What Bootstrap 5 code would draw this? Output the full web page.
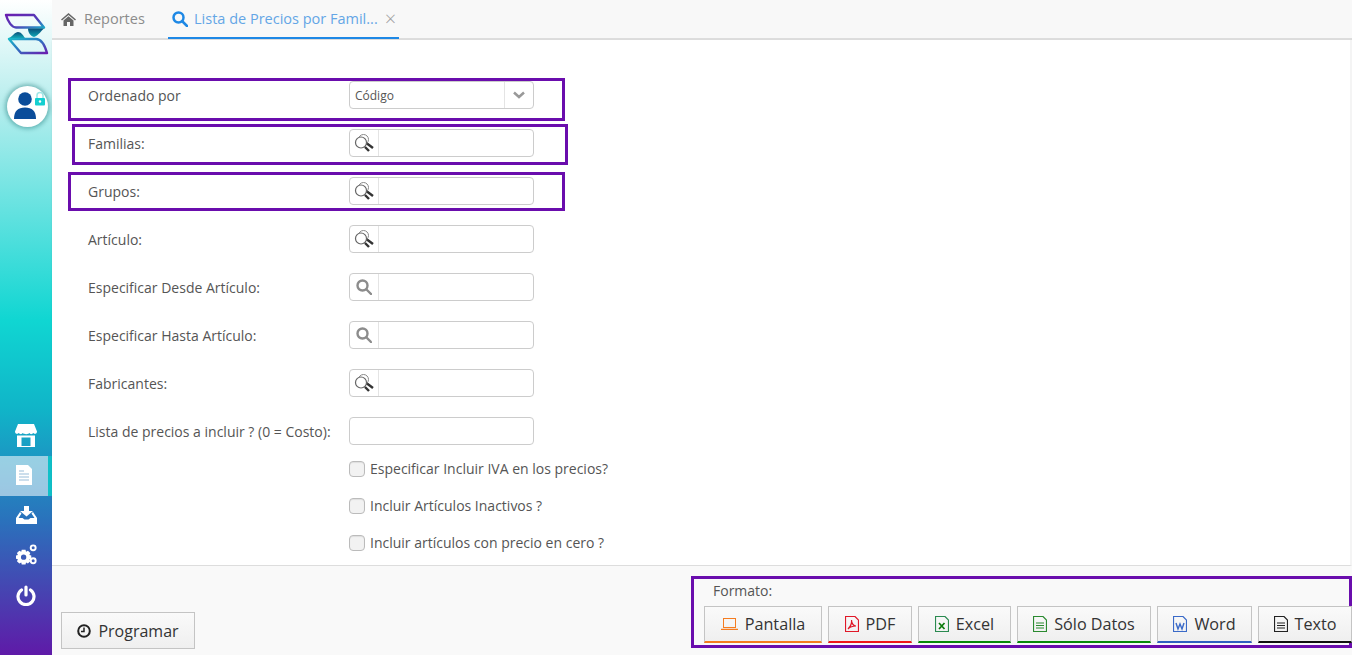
<!DOCTYPE html>
<html lang="es">
<head>
<meta charset="utf-8">
<title>Lista de Precios</title>
<link href="https://cdn.jsdelivr.net/npm/bootstrap@5.3.0/dist/css/bootstrap.min.css" rel="stylesheet">
<style>
html,body{height:100%;overflow:hidden}
body{font-family:"Open Sans","Noto Sans",sans-serif;font-size:14px;color:#555;background:#f9f9f9}
.shell{height:655px}
.side{width:52px;flex:none;background:linear-gradient(180deg,#fff 0,#b9eeee 100px,#10d6d2 320px,#10b4c8 410px,#2a72bc 520px,#4a3eb0 600px,#5f1aa8 655px)}
.logo-box{height:68px;padding:12px 0 0 4px}
.avatar{width:41px;height:41px;margin:18px 0 0 7px;border-radius:50%;background:#fff;box-shadow:0 0 4px 2px rgba(0,100,100,.4)}
.avatar svg{display:block}
.side-nav{margin-top:auto;padding-bottom:39px}
.side-item{height:40px;display:flex;align-items:center;justify-content:center}
.side-item svg.up{margin-bottom:2px}
.side-item.on{background:rgba(255,255,255,.55);border-right:4px solid #10c0c8}
.side-item.h38{height:38px}
.side-item.h41{height:41px}
.mainc{min-width:0}
.tabbar{height:40px;background:#f8f8f8;border-bottom:2px solid #ddd;padding-left:9px;font-size:14.5px}
.tb{height:38px;display:flex;align-items:center;color:#8c8c8c}
.tb.first{width:107px;gap:8px}
.tb.act{width:231px;color:#64a6e6;border-bottom:2px solid #1e88e5;margin-bottom:-1px;height:39px;padding-left:4px;gap:6px}
.tb .xx{color:#a0a0a0;font-size:20px;margin-left:1px;line-height:1;font-weight:300}
.paper{height:526px;background:#fff;border-right:2px solid #f4f4f4;border-bottom:1px solid #ddd;box-shadow:0 1px 2px rgba(0,0,0,.08);padding:31px 0 0 36px;position:relative}
.frow{height:48px;display:flex;align-items:center}
.frow label{width:261px;flex:none;white-space:nowrap}
.fbox{width:185px;height:28px;border:1px solid #ccc;border-radius:4px;display:flex;background:#fff;overflow:hidden}
.fadd{width:29px;flex:none;border-right:1px solid #e4e4e4;display:flex;align-items:center;justify-content:center}
.fsel{flex:1;padding:0 5px;font-size:12px;line-height:28px;color:#555}
.fcar{width:29px;flex:none;border-left:1px solid #e4e4e4;display:flex;align-items:center;justify-content:center}
.cks{margin-left:261px;margin-top:-5px}
.ckrow{height:37px;display:flex;align-items:center;gap:5px;margin:0}
.ckbox{width:16px;height:16px;border:1px solid #bbb;border-radius:4px;background:#f2f2f2;box-shadow:inset 0 1px 1px rgba(0,0,0,.08);flex:none}
.mark-a{position:absolute;border:3px solid #6a0dad;pointer-events:none}
.mk1{left:16px;top:38px;width:497px;height:43px}
.mk2{left:20px;top:84px;width:496px;height:41px}
.mk3{left:16px;top:132px;width:497px;height:39px}
.footbar{height:89px;position:relative;background:#f9f9f9;padding:0 0 6px 9px}
.pbtn,.fbtn{border:1px solid #c4c4c4;border-radius:0;background:linear-gradient(180deg,#fafafa,#efefef);color:#333;font-size:16px;height:37px;padding:0;display:inline-flex;align-items:center;justify-content:center;gap:7px}
.pbtn{width:134px}
.fmt{position:absolute;left:639px;top:10px;width:661px;height:72px;border:3px solid #6a0dad;padding:3px 0 0 10px}
.fmt-label{padding-left:9px;height:24px;line-height:18px}
.fmt-row{gap:6px}
.fbtn{border-bottom-width:2px;flex:none;font-size:16.2px}
.w-pan{width:118px}.w-pdf{width:84px}.w-xls{width:93px}.w-sol{width:134px}.w-wrd{width:95px}.w-txt{width:94px;margin-right:-4px}
.b-or{border-bottom-color:#f57c20}.b-re{border-bottom-color:#f01818}.b-gr{border-bottom-color:#0a8a0a}.b-bl{border-bottom-color:#3060c0}.b-bk{border-bottom-color:#111}
</style>
</head>
<body>
<svg class="d-none" aria-hidden="true">
  <symbol id="dbl" viewBox="0 0 20 18"><circle cx="9.500" cy="5.500" r="5" fill="none" stroke="#888" stroke-width="1"/><circle cx="7" cy="8.500" r="5.500" fill="#fff" stroke="#666" stroke-width="1.200"/><path d="M13 9.500 19 14" stroke="#333" stroke-width="2.400"/><path d="M11 13 15 17" stroke="#333" stroke-width="2.400"/></symbol>
  <symbol id="mag" viewBox="0 0 16 16"><circle cx="6.500" cy="6.500" r="5" fill="none" stroke="#8c8c8c" stroke-width="2.400"/><path d="M10.500 10.500 15 15" stroke="#8c8c8c" stroke-width="2.400" stroke-linecap="round"/></symbol>
</svg>
<div class="shell d-flex">
  <aside class="side d-flex flex-column">
    <div class="logo-box">
      <svg width="46" height="44" viewBox="4 12 46 44" fill="none">
        <defs>
          <linearGradient id="lg1" x1="0" y1="0" x2="1" y2="1"><stop offset="0" stop-color="#6a1fb0"/><stop offset=".6" stop-color="#5040b8"/><stop offset="1" stop-color="#1aa8c8"/></linearGradient>
          <linearGradient id="lg2" x1="0" y1="0" x2="1" y2="1"><stop offset="0" stop-color="#18b8c8"/><stop offset=".5" stop-color="#3070c0"/><stop offset="1" stop-color="#6a1fb0"/></linearGradient>
          <linearGradient id="lg3" x1="0" y1="0" x2="0" y2="1"><stop offset="0" stop-color="#0a4d78"/><stop offset="1" stop-color="#10a8b8"/></linearGradient>
        </defs>
        <path d="M6 15H34L44 27.500H16C12 27.500 8 22 6 15Z" stroke="url(#lg1)" stroke-width="2.400" stroke-linejoin="round"/>
        <path d="M9 39H36C41 39 45 46 47 53H21Z" stroke="url(#lg2)" stroke-width="2.400" stroke-linejoin="round"/>
        <path d="M9 38C13 36 15 32 18 32 21 32 23 35 25 38Z" fill="url(#lg3)"/>
        <path d="M28 28.500H44C41 31 39 35 34 37 30 36 28 32 28 28.500Z" fill="url(#lg3)"/>
      </svg>
    </div>
    <div class="avatar">
      <svg width="41" height="41" viewBox="0 0 41 41"><circle cx="18" cy="13" r="6.800" fill="#0a4d9a"/><path d="M7 33C7 25 11 21.500 18 21.500S29 25 29 33Z" fill="#0a4d9a"/><path d="M30 12V9.500A3 3 0 0 1 36 9.500V12" stroke="#9fe6e6" fill="none" stroke-width="1.500"/><rect x="28" y="12" width="10" height="7.500" rx="1" fill="#14cfd0"/><circle cx="33" cy="15.500" r="1.200" fill="#fff"/></svg>
    </div>
    <nav class="side-nav">
      <div class="side-item"><svg class="up" width="22" height="23" viewBox="0 0 22 23" fill="#fff"><path d="M3 0H19L22 7.500C22 10 19.500 10.500 18.500 9 17 10.500 15 10.500 14.500 9 13.500 10.500 9 10.500 7.500 9 7 10.500 5 10.500 3.500 9 2.500 10.500 0 10 0 7.500Z"/><path fill-rule="evenodd" d="M2 11.500H20V23H2ZM6.500 13.500V22H15.500V13.500Z"/></svg></div>
      <div class="side-item on"><svg class="up" width="16" height="20" viewBox="0 0 16 20"><path d="M0 0H12L16 4V20H0Z" fill="#fff"/><path d="M3 6H8M3 9H13M3 12H13M3 15H13" stroke="#bcd3e6" stroke-width="1.400"/></svg></div>
      <div class="side-item h38"><svg width="21" height="18" viewBox="0 0 21 18" fill="#fff"><path d="M8 0H13V5H17L10.500 10.500 4 5H8Z"/><path d="M4 6 0 12V18H21V12L17 6 15.500 7.500 18.500 12H14.500L12.500 13.500H8.500L6.500 12H2.500L5.500 7.500Z"/></svg></div>
      <div class="side-item h41"><svg width="21" height="21" viewBox="0 0 22 22" fill="#fff"><path fill-rule="evenodd" d="M6 6H10L10.500 8 12.500 7 15 9.500 14 11.500 16 12V15.500L14 16 15 18 12.500 20.500 10.500 19.500 10 21.500H6L5.500 19.500 3.500 20.500 1 18 2 16 0 15.500V12L2 11.500 1 9.500 3.500 7 5.500 8ZM8 11A2.800 2.800 0 1 0 8 16.600 2.800 2.800 0 1 0 8 11Z"/><circle cx="18" cy="4" r="2.600" fill="none" stroke="#fff" stroke-width="2"/><circle cx="18" cy="17.500" r="2.600" fill="none" stroke="#fff" stroke-width="2"/></svg></div>
      <div class="side-item h41"><svg width="20" height="21" viewBox="0 0 20 21" fill="none" stroke="#fff" stroke-width="3.200" stroke-linecap="round"><path d="M10 2V10"/><path d="M5.500 5A8 8 0 1 0 14.500 5"/></svg></div>
    </nav>
  </aside>
  <main class="mainc flex-grow-1 d-flex flex-column">
    <div class="tabbar d-flex">
      <div class="tb first"><svg width="15" height="13" viewBox="0 0 15 13" fill="#666"><path d="M7.500 0 15 6.500 14 7.500 7.500 2 1 7.500 0 6.500ZM2.500 7.500 7.500 3.300 12.500 7.500V13H9V9H6V13H2.500Z"/></svg><span>Reportes</span></div>
      <div class="tb act"><svg width="16" height="16" viewBox="0 0 16 16" fill="none" stroke="#1e88e5" stroke-width="2.500"><circle cx="6.500" cy="6.500" r="5"/><path d="M10 10 15 15" stroke-linecap="round"/></svg><span>Lista de Precios por Famil...</span><span class="xx">×</span></div>
    </div>
    <div class="paper">
      <div class="frow"><label>Ordenado por</label><div class="fbox"><div class="fsel">Código</div><div class="fcar"><svg width="12" height="8" viewBox="0 0 12 8" fill="none" stroke="#999" stroke-width="2.500"><path d="M1 1.500 6 6 11 1.500"/></svg></div></div></div>
      <div class="frow"><label>Familias:</label><div class="fbox"><div class="fadd"><svg width="20" height="18"><use href="#dbl"/></svg></div></div></div>
      <div class="frow"><label>Grupos:</label><div class="fbox"><div class="fadd"><svg width="20" height="18"><use href="#dbl"/></svg></div></div></div>
      <div class="frow"><label>Artículo:</label><div class="fbox"><div class="fadd"><svg width="20" height="18"><use href="#dbl"/></svg></div></div></div>
      <div class="frow"><label>Especificar Desde Artículo:</label><div class="fbox"><div class="fadd"><svg width="16" height="16"><use href="#mag"/></svg></div></div></div>
      <div class="frow"><label>Especificar Hasta Artículo:</label><div class="fbox"><div class="fadd"><svg width="16" height="16"><use href="#mag"/></svg></div></div></div>
      <div class="frow"><label>Fabricantes:</label><div class="fbox"><div class="fadd"><svg width="20" height="18"><use href="#dbl"/></svg></div></div></div>
      <div class="frow"><label>Lista de precios a incluir ? (0 = Costo):</label><div class="fbox"></div></div>
      <div class="cks">
        <div class="ckrow"><span class="ckbox"></span><span>Especificar Incluir IVA en los precios?</span></div>
        <div class="ckrow"><span class="ckbox"></span><span>Incluir Artículos Inactivos ?</span></div>
        <div class="ckrow"><span class="ckbox"></span><span>Incluir artículos con precio en cero ?</span></div>
      </div>
      <div class="mark-a mk1"></div>
      <div class="mark-a mk2"></div>
      <div class="mark-a mk3"></div>
    </div>
    <div class="footbar d-flex align-items-end">
      <button class="pbtn" type="button"><svg width="14" height="14" viewBox="0 0 14 14" fill="none" stroke="#222" stroke-width="2"><circle cx="7" cy="7" r="5.800"/><path d="M7 3.500V7.500H4" stroke-width="1.500"/></svg>Programar</button>
      <div class="fmt">
        <div class="fmt-label">Formato:</div>
        <div class="d-flex fmt-row">
          <button class="fbtn b-or w-pan" type="button"><svg width="17" height="12" viewBox="0 0 17 12" fill="none" stroke="#f57c20"><rect x="2.500" y="0.500" width="12" height="9"/><path d="M0 11.500H17" stroke-width="1.500"/></svg>Pantalla</button>
          <button class="fbtn b-re w-pdf" type="button"><svg width="14" height="16" viewBox="0 0 14 16" fill="none" stroke="#e01828" stroke-width="1.200"><path d="M.5.500H10L13.500 4V15.500H.5Z"/><path d="M3 13C5 11 7 7 6.500 4 6.500 8 9 10 11 10 8 10 5 11 3 13Z"/></svg>PDF</button>
          <button class="fbtn b-gr w-xls" type="button"><svg width="14" height="16" viewBox="0 0 14 16" fill="none" stroke="#2a8a50" stroke-width="1.200"><path d="M.5.500H10L13.500 4V15.500H.5Z"/><path d="M4 7 9.500 13M9.500 7 4 13" stroke="#0a7a0a" stroke-width="1.700"/></svg>Excel</button>
          <button class="fbtn b-gr w-sol" type="button"><svg width="14" height="16" viewBox="0 0 14 16" fill="none" stroke="#2a8a30" stroke-width="1.200"><path d="M.5.500H10L13.500 4V15.500H.5Z"/><path d="M3 7H11M3 9.500H11M3 12H11"/></svg>Sólo Datos</button>
          <button class="fbtn b-bl w-wrd" type="button"><svg width="14" height="16" viewBox="0 0 14 16" fill="none" stroke="#3a6ac8" stroke-width="1.200"><path d="M.5.500H10L13.500 4V15.500H.5Z"/><path d="M3 7 5 13 7 8 9 13 11 7" stroke-width="1.400"/></svg>Word</button>
          <button class="fbtn b-bk w-txt" type="button"><svg width="14" height="16" viewBox="0 0 14 16" fill="none" stroke="#222" stroke-width="1.200"><path d="M.5.500H10L13.500 4V15.500H.5Z"/><path d="M3 7H11M3 9.500H11M3 12H11"/></svg>Texto</button>
        </div>
      </div>
    </div>
  </main>
</div>
<script src="https://cdn.jsdelivr.net/npm/bootstrap@5.3.0/dist/js/bootstrap.bundle.min.js"></script>
</body>
</html>
